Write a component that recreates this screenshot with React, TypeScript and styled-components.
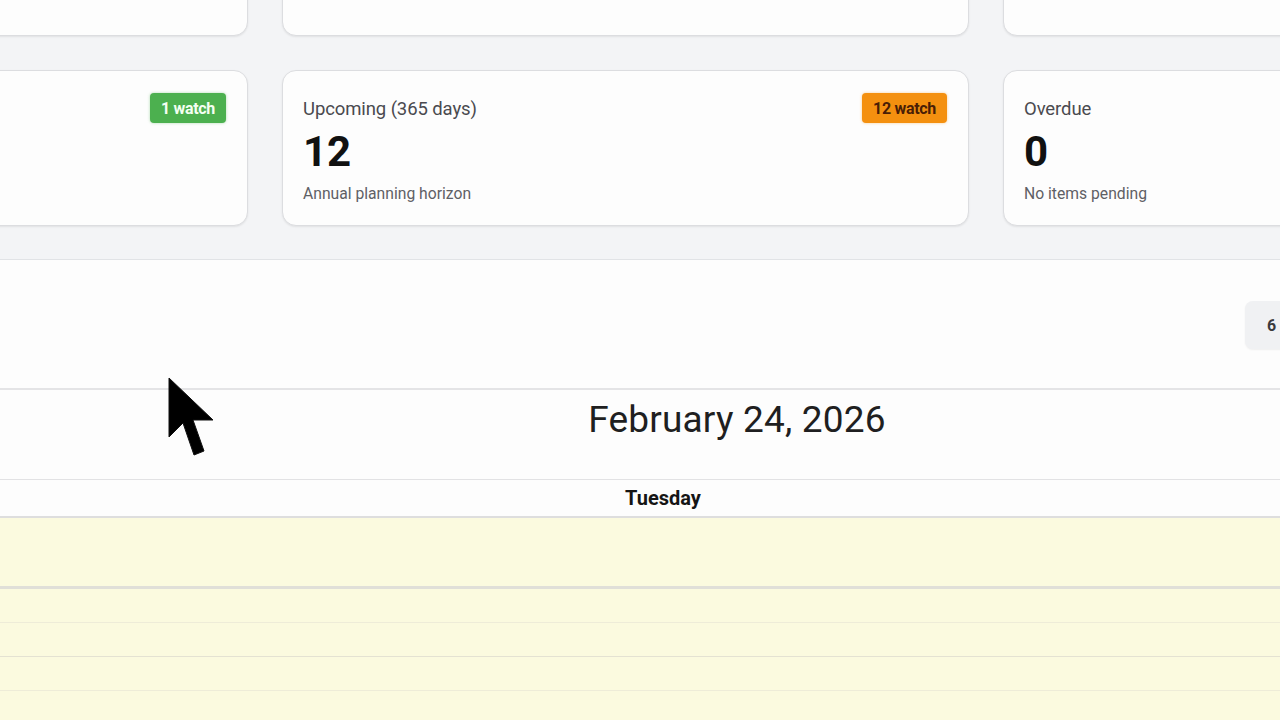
import React from "react";
import styled, { createGlobalStyle } from "styled-components";

const Global = createGlobalStyle`
  html, body { margin: 0; padding: 0; background: #fdfdfd; }
  body { font-family: Roboto, "Liberation Sans", Arial, sans-serif; color: #1d1d1f; overflow: hidden; }
  * { box-sizing: border-box; }
`;

const Page = styled.div`
  position: relative;
  width: 1280px;
  height: 720px;
  overflow: hidden;
  background: #fdfdfd;
`;

const Band = styled.section`
  background: #f3f4f6;
  border-bottom: 1px solid #e1e3e6;
  padding-bottom: 33px;
  overflow: hidden;
`;

const CardGrid = styled.div`
  display: grid;
  grid-template-columns: repeat(3, 687px);
  column-gap: 34px;
  row-gap: 34px;
  margin-left: -439px;
  margin-top: -120px;
`;

const Card = styled.div`
  height: 156px;
  background: #fdfdfd;
  border: 1px solid #dcdde0;
  border-radius: 14px;
  box-shadow: 0 1px 2px rgba(0, 0, 0, 0.08);
  padding: 22px 21px 0 20px;
  display: flex;
  justify-content: space-between;
  align-items: flex-start;
`;

const CardBody = styled.div`
  display: flex;
  flex-direction: column;
`;

const CardTitle = styled.div`
  font-size: 18.5px;
  color: #4a4a4f;
  line-height: 24px;
  margin-top: 4px;
  letter-spacing: -0.1px;
`;

const CardValue = styled.div`
  font-size: 42px;
  font-weight: 700;
  color: #111;
  line-height: 48px;
  margin-top: 7px;
`;

const CardNote = styled.div`
  font-size: 15.7px;
  color: #5f6065;
  line-height: 20px;
  margin-top: 8px;
`;

const Badge = styled.span<{ $tone: "green" | "orange" }>`
  display: inline-flex;
  align-items: center;
  justify-content: center;
  height: 30px;
  padding: 0 11px;
  border-radius: 4px;
  font-size: 16px;
  font-weight: 700;
  letter-spacing: -0.3px;
  background: ${(p) => (p.$tone === "green" ? "#4cb04f" : "#f4900f")};
  color: ${(p) => (p.$tone === "green" ? "#f4fff2" : "#4a1e06")};
  box-shadow: 0 0 3px ${(p) => (p.$tone === "green" ? "rgba(76,176,79,0.45)" : "rgba(244,144,15,0.45)")};
`;

const Toolbar = styled.div`
  height: 130px;
  display: flex;
  align-items: center;
  justify-content: flex-end;
  border-bottom: 2px solid #e4e4e6;
`;

const CountPill = styled.div`
  width: 48px;
  height: 48px;
  margin-right: -13px;
  margin-top: 2px;
  background: #f0f1f3;
  border-radius: 8px;
  display: flex;
  align-items: center;
  padding-left: 22px;
  font-size: 16px;
  font-weight: 700;
  color: #3a3a3d;
  box-shadow: 0 1px 2px rgba(0, 0, 0, 0.06);
`;

const DateHeader = styled.div`
  height: 90px;
  display: flex;
  align-items: center;
  justify-content: center;
  padding-left: 194px;
  padding-bottom: 30px;
  font-size: 37px;
  letter-spacing: 0.2px;
  color: #1f1f21;
  border-bottom: 1px solid #e2e2e4;
`;

const DayHeader = styled.div`
  height: 38px;
  display: flex;
  align-items: center;
  justify-content: center;
  padding-left: 46px;
  font-size: 20px;
  font-weight: 700;
  color: #151515;
  border-bottom: 2px solid #dedede;
`;

const Grid = styled.div`
  background: #fbfadf;
  display: flex;
  flex-direction: column;
`;

const AllDay = styled.div`
  height: 71px;
  border-bottom: 3px solid #e0dfd8;
`;

const Slot = styled.div<{ $major?: boolean }>`
  height: 34px;
  border-bottom: 1px solid ${(p) => (p.$major ? "#e4e2d2" : "#eeecd8")};
`;

const Pointer = styled.svg`
  position: absolute;
  left: 164px;
  top: 374px;
  width: 56px;
  height: 88px;
  pointer-events: none;
`;

export default function App() {
  return (
    <Page>
      <Global />
      <Band>
        <CardGrid>
          <Card />
          <Card />
          <Card />
          <Card>
            <CardBody />
            <Badge $tone="green">1 watch</Badge>
          </Card>
          <Card>
            <CardBody>
              <CardTitle>Upcoming (365 days)</CardTitle>
              <CardValue>12</CardValue>
              <CardNote>Annual planning horizon</CardNote>
            </CardBody>
            <Badge $tone="orange">12 watch</Badge>
          </Card>
          <Card>
            <CardBody>
              <CardTitle>Overdue</CardTitle>
              <CardValue>0</CardValue>
              <CardNote>No items pending</CardNote>
            </CardBody>
          </Card>
        </CardGrid>
      </Band>
      <Toolbar>
        <CountPill>6</CountPill>
      </Toolbar>
      <DateHeader>February 24, 2026</DateHeader>
      <DayHeader>Tuesday</DayHeader>
      <Grid>
        <AllDay />
        <Slot />
        <Slot $major />
        <Slot />
        <Slot $major />
      </Grid>
      <Pointer viewBox="0 0 56 88">
        <polygon
          points="5,4 5,63 19,49 30,81 40,77 29,46 49,46"
          fill="#000"
          stroke="#111"
          strokeWidth="1"
          strokeLinejoin="round"
        />
      </Pointer>
    </Page>
  );
}
